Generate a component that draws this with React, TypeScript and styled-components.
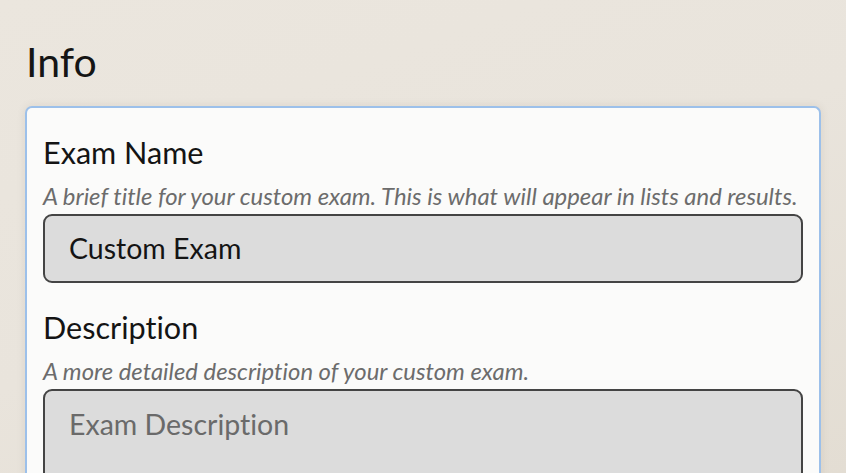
import React from "react";
import styled, { createGlobalStyle } from "styled-components";

const Global = createGlobalStyle`
  html, body { margin: 0; padding: 0; height: 100%; }
  body {
    background: linear-gradient(160deg, #ebe6de 0%, #e9e4dc 50%, #e3ddd3 100%);
    font-family: Lato, "Open Sans", sans-serif;
    font-variant-ligatures: none;
    overflow: hidden;
  }
  #root { height: 100%; }
`;

const Page = styled.div`
  width: 846px;
  height: 473px;
  padding: 38px 25px 0 25px;
  box-sizing: border-box;
  display: flex;
  flex-direction: column;
`;

const Heading = styled.h1`
  margin: 0 0 20px 1px;
  font-size: 41px;
  font-weight: 400;
  line-height: 48px;
  color: #151515;
`;

const Card = styled.div`
  background: #fbfbfa;
  border: 2px solid #9cc0ea;
  border-bottom: none;
  border-radius: 7px 7px 0 0;
  padding: 27px 16px 40px 16px;
  display: flex;
  flex-direction: column;
  gap: 27px;
  box-shadow: 0 0 8px rgba(90, 70, 40, 0.1);
`;

const Field = styled.div`
  display: flex;
  flex-direction: column;
`;

const Label = styled.label`
  font-size: 30.6px;
  line-height: 36px;
  color: #141414;
`;

const Hint = styled.div`
  font-size: 23.85px;
  font-style: italic;
  line-height: 28px;
  color: #6c6c6c;
  margin: 10.5px 0 4.5px 0;
  white-space: nowrap;
`;

const Input = styled.div<{ $placeholder?: boolean; $tall?: boolean }>`
  box-sizing: border-box;
  height: ${(p) => (p.$tall ? "140px" : "69px")};
  background: #dcdcdc;
  border: 2px solid #444444;
  border-radius: 9px;
  padding: ${(p) => (p.$tall ? "15.5px 24px" : "0 24px")};
  display: flex;
  align-items: ${(p) => (p.$tall ? "flex-start" : "center")};
  font-size: 28.5px;
  line-height: 1.2;
  color: ${(p) => (p.$placeholder ? "#6a6a6a" : "#141414")};
`;

export default function App() {
  return (
    <>
      <Global />
      <Page>
        <Heading>Info</Heading>
        <Card>
          <Field>
            <Label>Exam Name</Label>
            <Hint>A brief title for your custom exam. This is what will appear in lists and results.</Hint>
            <Input>Custom Exam</Input>
          </Field>
          <Field>
            <Label>Description</Label>
            <Hint>A more detailed description of your custom exam.</Hint>
            <Input $placeholder $tall>Exam Description</Input>
          </Field>
        </Card>
      </Page>
    </>
  );
}
